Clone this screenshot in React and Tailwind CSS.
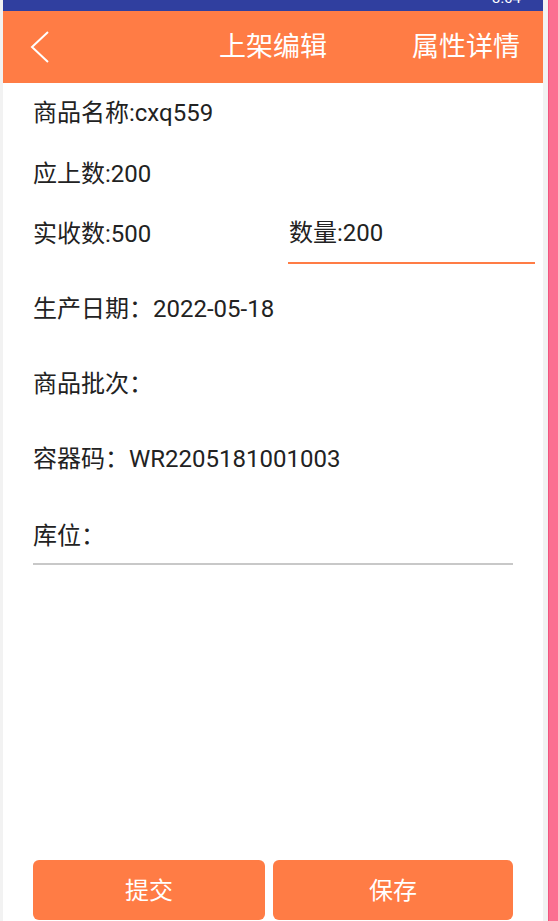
import React from 'react';

const font = { fontFamily: 'Roboto, "Noto Sans CJK SC", sans-serif' };

const Row = ({ children, className = '' }) => (
  <div className={`flex items-center text-[24px] text-[#222222] ${className}`}>{children}</div>
);

const App = () => {
  return (
    <div className="flex w-[558px] h-[921px] overflow-hidden bg-white" style={font}>
      <div className="w-[3px] bg-[#f2f2f2]" />

      <div className="flex flex-col w-[540px] h-full bg-white">
        {/* status bar */}
        <div className="h-[11px] bg-[#303f9f] overflow-hidden flex justify-end pr-[22px]">
          <span className="text-white text-[15px] leading-none -mt-[9px]">3:04</span>
        </div>

        {/* header */}
        <div className="h-[72px] bg-[#ff7c45] flex items-center">
          <div className="w-[135px] pl-[26px] flex items-center">
            <svg width="22" height="34" viewBox="0 0 22 34" fill="none">
              <polyline points="19,2 3,17 19,32" stroke="white" strokeWidth="2" />
            </svg>
          </div>
          <div className="flex-1 text-center text-white text-[27px]">上架编辑</div>
          <div className="w-[135px] text-right pr-[23px] text-white text-[27px] whitespace-nowrap">属性详情</div>
        </div>

        {/* form */}
        <div className="flex-1 pl-[30px]">
          <Row className="h-[60px]">商品名称:cxq559</Row>
          <Row className="h-[61px]">应上数:200</Row>
          <div className="flex h-[60px]">
            <Row className="w-[255px]">实收数:500</Row>
            <Row className="w-[247px] pl-[1px] border-b-2 border-[#ff7c45]">数量:200</Row>
          </div>
          <div className="mt-[7px]">
            <Row className="h-[75px]">生产日期：2022-05-18</Row>
            <Row className="h-[75px]">商品批次：</Row>
            <Row className="h-[75px]">容器码：WR2205181001003</Row>
            <Row className="h-[69px] w-[480px] pt-[12px] border-b-2 border-[#c8c8c8]">库位：</Row>
          </div>
        </div>

        {/* actions */}
        <div className="flex gap-[8px] pl-[30px] mb-[1px]">
          <button className="w-[232px] h-[60px] pt-[2px] rounded-[6px] bg-[#ff7c45] text-white text-[24px]">提交</button>
          <button className="w-[240px] h-[60px] pt-[2px] rounded-[6px] bg-[#ff7c45] text-white text-[24px]">保存</button>
        </div>
      </div>

      <div className="w-[5px] bg-[#f2f2f2]" />
      <div className="w-[1px] bg-[#f2557f]" />
      <div className="flex-1 bg-[#fb6f91]" />
    </div>
  );
};

export default App;
